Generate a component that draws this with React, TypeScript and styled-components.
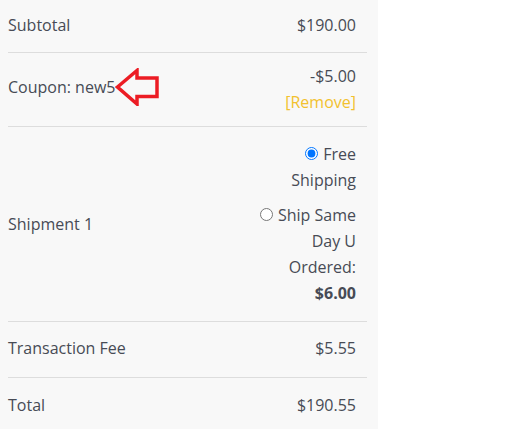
import styled, { createGlobalStyle } from "styled-components";

const GlobalStyle = createGlobalStyle`
  body {
    margin: 0;
    background: #ffffff;
    font-family: "Open Sans", "Noto Sans", sans-serif;
    font-size: 16px;
    line-height: 26px;
    color: #474b55;
  }
`;

const Panel = styled.div`
  width: 378px;
  box-sizing: border-box;
  padding: 0 11px 0 8px;
  background: #f8f8f8;
`;

const Row = styled.div<{ $top: number; $bottom: number; $last?: boolean }>`
  display: flex;
  align-items: center;
  justify-content: space-between;
  padding: ${(p) => p.$top}px 0 ${(p) => p.$bottom}px;
  border-bottom: ${(p) => (p.$last ? "none" : "1px solid #dddddd")};
`;

const Label = styled.div`
  flex: 1;
  white-space: nowrap;
`;

const Value = styled.div`
  text-align: right;
  padding-right: 11px;
`;

const RemoveLink = styled.a`
  display: block;
  color: #f2c12e;
  text-decoration: none;
  cursor: pointer;
`;

const ShippingList = styled.ul`
  list-style: none;
  margin: 0;
  padding: 0 11px 0 0;
  width: 104px;
  text-align: right;

  li + li {
    margin-top: 9px;
  }
`;

const Radio = styled.input`
  margin: 3px 5px 0 5px;
  accent-color: #0075ff;
`;

const Arrow = styled.svg`
  vertical-align: middle;
  margin-top: -4px;
`;

const PointerArrow = () => (
  <Arrow width="44" height="38" viewBox="0 0 44 38">
    <polygon
      points="2.5,19 22,2.5 22,10 42,10 42,28.5 22,28.5 22,36"
      fill="none"
      stroke="#ec1c24"
      strokeWidth="3.5"
      strokeLinejoin="miter"
    />
  </Arrow>
);

export default function App() {
  return (
    <>
      <GlobalStyle />
      <Panel>
        <Row $top={12} $bottom={14}>
          <Label>Subtotal</Label>
          <Value>$190.00</Value>
        </Row>
        <Row $top={10} $bottom={11}>
          <Label>
            Coupon: new5
            <PointerArrow />
          </Label>
          <Value>
            -$5.00
            <RemoveLink>[Remove]</RemoveLink>
          </Value>
        </Row>
        <Row $top={14} $bottom={15}>
          <Label>Shipment 1</Label>
          <ShippingList>
            <li>
              <label>
                <Radio type="radio" name="shipping" defaultChecked />
                Free Shipping
              </label>
            </li>
            <li>
              <label>
                <Radio type="radio" name="shipping" />
                Ship Same Day U Ordered: <strong>$6.00</strong>
              </label>
            </li>
          </ShippingList>
        </Row>
        <Row $top={13} $bottom={16}>
          <Label>Transaction Fee</Label>
          <Value>$5.55</Value>
        </Row>
        <Row $top={14} $bottom={11} $last>
          <Label>Total</Label>
          <Value>$190.55</Value>
        </Row>
      </Panel>
    </>
  );
}
